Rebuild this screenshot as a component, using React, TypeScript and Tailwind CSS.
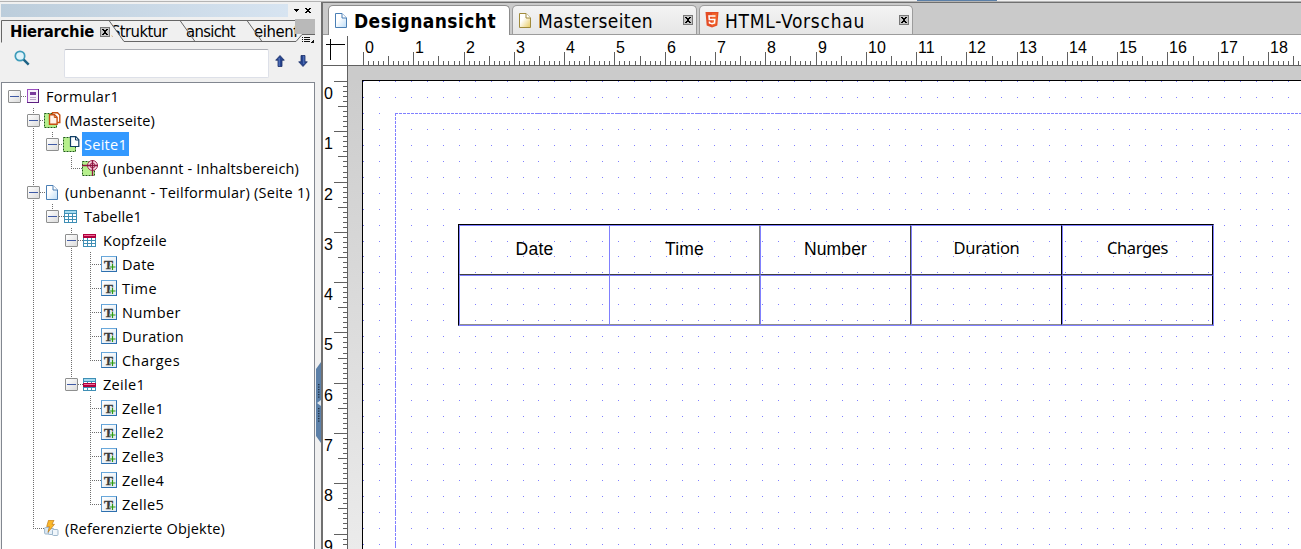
import { useLayoutEffect, useRef, type ReactNode } from "react";

/** Single-line label whose tracking is adjusted so that it fills `w` pixels. */
function Fit({ w, children, className = "" }: { w: number; children: string; className?: string }) {
  const ref = useRef<HTMLSpanElement>(null);
  useLayoutEffect(() => {
    const el = ref.current;
    if (!el) return;
    el.style.letterSpacing = "0px";
    const natural = el.getBoundingClientRect().width;
    el.style.letterSpacing = `${(w - natural) / children.length}px`;
  }, [w, children]);
  return (
    <span ref={ref} className={`inline-block whitespace-pre ${className}`}>
      {children}
    </span>
  );
}

const tabFont = "font-['DejaVu_Sans_Condensed','DejaVu_Sans',sans-serif]";

/* ---------- tree icons ---------- */

function FormIcon() {
  return (
    <svg width="12" height="14" viewBox="0 0 12 14" shapeRendering="crispEdges">
      <rect x=".5" y=".5" width="11" height="13" fill="#f7f0fa" stroke="#9b4fc0" />
      <rect x="11" y="0" width="1" height="14" fill="#5c1f80" />
      <rect x="0" y="13" width="12" height="1" fill="#5c1f80" />
      <rect x="3" y="3" width="6" height="3" fill="#7a3a9c" />
      <path d="M3 8h6v1h-6zM3 10h6v1h-6z" fill="#b9a3c6" />
    </svg>
  );
}

function MasterIcon() {
  return (
    <svg width="17" height="16" viewBox="0 0 17 16">
      <rect x=".5" y="1.5" width="12" height="14" fill="#b6f08c" stroke="#1d5c14" strokeDasharray="2 1" />
      <path d="M8.500 .7h5l2.300 2.300v7.500h-7.300z" fill="#fff" stroke="#c65012" strokeWidth="1.400" />
      <path d="M5.500 2.700h5l2.600 2.600v7h-7.600z" fill="#fff3ea" stroke="#c65012" strokeWidth="1.400" />
      <path d="M10.300 2.700v2.800h2.800" fill="none" stroke="#c65012" />
    </svg>
  );
}

function PageIcon() {
  return (
    <svg width="17" height="17" viewBox="0 0 17 17">
      <rect x=".5" y="1.500" width="12" height="14" fill="#b6f08c" stroke="#1d5c14" strokeDasharray="2 1" />
      <path d="M7.500 .7h5.300l3 3v6.800h-8.300z" fill="#fff" stroke="#123f66" strokeWidth="1.200" />
      <path d="M12.500 .7v3.300h3.300" fill="none" stroke="#123f66" />
    </svg>
  );
}

function AreaIcon() {
  return (
    <svg width="17" height="17" viewBox="0 0 17 17">
      <rect x=".5" y="1.500" width="12" height="14" fill="#b6f08c" stroke="#1d5c14" strokeDasharray="2 1" />
      <circle cx="10.500" cy="5.500" r="5" fill="#f8d8e4" stroke="#a52a55" />
      <circle cx="10.500" cy="5.500" r="2.500" fill="none" stroke="#a52a55" />
      <path d="M0 5.500h16M10.500 0v16" stroke="#8c1540" strokeWidth="1.300" />
    </svg>
  );
}

function SheetIcon({ tone }: { tone: "blue" | "gold" }) {
  const stroke = tone === "blue" ? "#4a7fb5" : "#a08a3c";
  const end = tone === "blue" ? "#bcdcf6" : "#e8c95c";
  return (
    <svg width="12" height="15" viewBox="0 0 12 15">
      <defs>
        <linearGradient id={`sheet-${tone}`} x1="0" y1="0" x2="1" y2="1">
          <stop offset=".35" stopColor="#fff" />
          <stop offset="1" stopColor={end} />
        </linearGradient>
      </defs>
      <path d="M.5 .5h6.500l4.500 4.500v9.500h-11z" fill={`url(#sheet-${tone})`} stroke={stroke} />
      <path d="M7 .5v4.500h4.500" fill="#fff" stroke={stroke} />
    </svg>
  );
}

function TableIcon({ row }: { row?: "head" | "body" }) {
  return (
    <svg width="13" height="13" viewBox="0 0 13 13" shapeRendering="crispEdges">
      <rect width="13" height="13" fill="#3f8fb5" />
      <rect x="1" y="1" width="11" height="2" fill="#a5dbf0" />
      {[1, 5, 9].map((x) => (
        <g key={x} fill="#fff">
          <rect x={x} y="4" width="3" height="2" />
          <rect x={x} y="7" width="3" height="2" />
          <rect x={x} y="10" width="3" height="2" />
        </g>
      ))}
      {row === "head" && (
        <>
          <rect width="13" height="4" fill="#b0003c" />
          <rect x="1" y="1" width="11" height="1" fill="#ee6a98" />
        </>
      )}
      {row === "body" && (
        <>
          <rect y="5" width="13" height="4" fill="#b0003c" />
          <rect x="1" y="6" width="11" height="1" fill="#ee6a98" />
        </>
      )}
    </svg>
  );
}

function TextIcon() {
  return (
    <span className="flex size-4 border border-[#2d6fae] border-t-[#6aa9dc] border-l-[#5b9bd0] bg-linear-to-br from-white to-[#dfe8f0]">
      <svg width="14" height="14" viewBox="0 0 14 14">
        <text x="2" y="11.500" fontSize="13.500" fontWeight="bold" fill="#3c3c3c" stroke="#3c3c3c" strokeWidth=".4" fontFamily="Liberation Serif, serif">T</text>
        <path d="M10.500 7v6M7.500 10h6" stroke="#e8eef3" strokeWidth="2.600" />
        <path d="M10.500 7v6M7.500 10h6" stroke="#2c9a10" strokeWidth="1.200" />
      </svg>
    </span>
  );
}

function RefIcon() {
  return (
    <svg width="15" height="16" viewBox="0 0 15 16">
      <rect x=".6" y="7.500" width="5.500" height="6.500" rx="1" fill="#dbe8f3" stroke="#9db7cc" />
      <rect x="4.500" y="8.500" width="5.500" height="6" rx="1" fill="#e5eff8" stroke="#9db7cc" />
      <rect x="8.500" y="9.500" width="5.500" height="6" rx="1" fill="#f0f6fb" stroke="#9db7cc" />
      <path d="M4.500 .3h5.500l-2 4h2.500l-6.500 8 1.500-5.800h-2.800z" fill="#fbb829" stroke="#c07a18" strokeWidth=".7" />
    </svg>
  );
}

/* ---------- tree ---------- */

type Node = { label: string; w: number; pad: string; icon: ReactNode; box: string; toggle?: boolean; gap: string; on?: boolean };

const cell = (label: string, w: number): Node => ({
  label, w, pad: "pl-[99px]", icon: <TextIcon />, box: "w-4", gap: "ml-[5px]",
});

const nodes: Node[] = [
  { label: "Formular1", w: 73, pad: "pl-[6px]", toggle: true, icon: <FormIcon />, box: "ml-[6px] w-3", gap: "ml-[7px]" },
  { label: "(Masterseite)", w: 90, pad: "pl-[25px]", toggle: true, icon: <MasterIcon />, box: "ml-1 w-[17px]", gap: "ml-1" },
  { label: "Seite1", w: 43, pad: "pl-[44px]", toggle: true, icon: <PageIcon />, box: "ml-1 w-[17px]", gap: "ml-[2px]", on: true },
  { label: "(unbenannt - Inhaltsbereich)", w: 196, pad: "pl-[80px]", icon: <AreaIcon />, box: "w-[17px]", gap: "ml-1" },
  { label: "(unbenannt - Teilformular) (Seite 1)", w: 245, pad: "pl-[25px]", toggle: true, icon: <SheetIcon tone="blue" />, box: "ml-[6px] w-3", gap: "ml-[7px]" },
  { label: "Tabelle1", w: 58, pad: "pl-[44px]", toggle: true, icon: <TableIcon />, box: "ml-[5px] w-[13px]", gap: "ml-[7px]" },
  { label: "Kopfzeile", w: 64, pad: "pl-[63px]", toggle: true, icon: <TableIcon row="head" />, box: "ml-[5px] w-[13px]", gap: "ml-[7px]" },
  cell("Date", 33),
  cell("Time", 35),
  cell("Number", 59),
  cell("Duration", 62),
  cell("Charges", 58),
  { label: "Zeile1", w: 42, pad: "pl-[63px]", toggle: true, icon: <TableIcon row="body" />, box: "ml-[5px] w-[13px]", gap: "ml-[7px]" },
  cell("Zelle1", 42),
  cell("Zelle2", 42),
  cell("Zelle3", 42),
  cell("Zelle4", 42),
  cell("Zelle5", 42),
  { label: "(Referenzierte Objekte)", w: 160, pad: "pl-[42px]", icon: <RefIcon />, box: "w-[15px]", gap: "ml-[6px]" },
];

function Connectors() {
  const rows = [
    [19, 25, 0], [38, 42, 1], [57, 61, 2], [69, 80, 3], [38, 44, 4], [57, 62, 5], [76, 81, 6],
    [88, 99, 7], [88, 99, 8], [88, 99, 9], [88, 99, 10], [88, 99, 11], [76, 81, 12],
    [88, 99, 13], [88, 99, 14], [88, 99, 15], [88, 99, 16], [88, 99, 17], [31, 42, 18],
  ];
  const cols = [[31, 25, 445], [50, 49, 61], [69, 73, 85], [50, 121, 133], [69, 145, 301], [88, 169, 277], [88, 313, 421]];
  return (
    <svg className="absolute left-0 top-0" width="312" height="466" shapeRendering="crispEdges">
      <g stroke="#6e6e6e" strokeDasharray="1 1">
        {rows.map(([a, b, k]) => <path key={k} d={`M${a} ${13.5 + 24 * k}H${b}`} />)}
        {cols.map(([x, a, b], i) => <path key={i} d={`M${x + 0.5} ${a}V${b}`} />)}
      </g>
    </svg>
  );
}

function Tree() {
  return (
    <div className="relative ml-px flex w-[314px] flex-1 flex-col overflow-hidden border border-b-0 border-[#828790] bg-white pt-px">
      <Connectors />
      {nodes.map((n) => (
        <div key={n.label} className={`relative flex h-6 shrink-0 items-center ${n.pad}`}>
          {n.toggle && (
            <span className="flex size-[13px] shrink-0 items-center justify-center rounded-[1px] border border-[#8e8f8f] bg-linear-to-br from-white to-[#dcdcdc]">
              <span className="h-px w-[9px] bg-[#3f5aa5]" />
            </span>
          )}
          <span className={`flex shrink-0 ${n.box}`}>{n.icon}</span>
          <span
            className={`flex h-6 items-center pt-px font-['Open_Sans',sans-serif] text-[14.5px] leading-[23px] ${n.gap} ${
              n.on ? "w-[47px] bg-[#3399ff] pl-[2px] text-white" : "text-black"
            }`}
          >
            <Fit w={n.w}>{n.label}</Fit>
          </span>
        </div>
      ))}
    </div>
  );
}

/* ---------- left panel ---------- */

function CloseBox() {
  return (
    <svg width="10" height="10" viewBox="0 0 10 10" shapeRendering="crispEdges">
      <rect x=".5" y=".5" width="9" height="9" fill="#c4c4c4" stroke="#777" />
      <path d="M2 2h2v1h2v-1h2v1h-1v1h-1v2h1v1h1v1h-2v-1h-2v1h-2v-1h1v-1h1v-2h-1v-1h-1z" fill="#000" />
    </svg>
  );
}

function PanelTabs() {
  return (
    <div className={`relative ml-px flex h-[25px] w-[314px] pt-px text-[16.5px] leading-6 ${tabFont}`}>
      <svg className="absolute left-0 top-0" width="314" height="25">
        <g fill="none" stroke="#666">
          <path d="M.5 23.500V1.500H294" />
          <path d="M123 22.500H295l6-7h13" />
        </g>
      </svg>
      <div className="flex w-[110px] shrink-0 items-center pl-[9px]">
        <Fit w={84} className="font-bold">Hierarchie</Fit>
        <span className="ml-[6px]"><CloseBox /></span>
      </div>
      <div className="flex w-[71px] shrink-0"><Fit w={56}>Struktur</Fit></div>
      <div className="flex w-[67px] shrink-0 pl-[4px]"><Fit w={49}>ansicht</Fit></div>
      <div className="flex w-[46px] shrink-0 pl-[5px]"><Fit w={44}>eihenf</Fit></div>
      <svg className="absolute left-0 top-0" width="314" height="25">
        <rect x="294" y="0" width="20" height="15" fill="#b9b9b9" />
        <path d="M109 2v12l6 8h7z" fill="#f0f0f0" />
        <g fill="none" stroke="#666">
          <path d="M108 1.500L123 22.500M179 1.500L194 22.500M246 1.500L261 22.500" />
        </g>
        <g fill="#111" shapeRendering="crispEdges">
          <path d="M301 18h1v1h-1zM303 18h6v1h-6zM301 20h1v1h-1zM303 20h6v1h-6zM301 22h1v1h-1zM303 22h6v1h-6z" />
          <path d="M313 20v4h-4z" />
        </g>
      </svg>
    </div>
  );
}

function Arrow({ down = false }: { down?: boolean }) {
  return (
    <svg width="10" height="12" viewBox="0 0 10 12" className={down ? "rotate-180" : ""}>
      <path d="M5 .5L9.300 5.200H7v6.300H3V5.200H.7z" fill="#27458f" stroke="#1a2f68" strokeWidth=".8" />
      <path d="M4.200 3v8" stroke="#5b7cc4" />
    </svg>
  );
}

function Sidebar() {
  return (
    <div className="flex w-[316px] shrink-0 flex-col bg-[#f0f0f0]">
      <div className="flex h-[16px] items-start pl-px pt-[2px]">
        <div className="h-[13px] w-[287px] bg-linear-to-r from-[#bccddb] to-[#d7e4f1]" />
        <svg width="26" height="13" viewBox="0 0 26 13" shapeRendering="crispEdges">
          <path d="M6 5h5v1h-1v1h-1v1h-1v-1h-1v-1h-1z" />
          <path d="M17 4h2v1h2v-1h2v1h-1v1h-1v1h1v1h1v1h-2v-1h-2v1h-2v-1h1v-1h1v-1h-1v-1h-1z" />
        </svg>
      </div>
      <div className="h-px" />
      <PanelTabs />
      <div className="flex h-[38px] items-start pl-[14px]">
        <svg width="16" height="16" viewBox="0 0 16 16" className="mt-[6px]">
          <circle cx="6" cy="6" r="4.700" fill="#dff3fa" stroke="#3d9cba" strokeWidth="1.700" />
          <path d="M9.700 9.700l5 5" stroke="#1d6285" strokeWidth="2.500" />
        </svg>
        <div className="ml-[34px] mt-[5px] h-[29px] w-[205px] rounded-[2px] border border-[#dde0e8] border-t-[#abadb3] bg-white" />
        <span className="ml-[6px] mt-[11px]"><Arrow /></span>
        <span className="ml-[13px] mt-[11px]"><Arrow down /></span>
      </div>
      <Tree />
    </div>
  );
}

function Splitter() {
  return (
    <div className="flex w-[5px] shrink-0 flex-col bg-[#f0f0f0] pt-[360px]">
      <svg width="5" height="81" viewBox="0 0 5 81">
        <path d="M5 0L0 7v67l5 7z" fill="#5c80a8" />
        <path d="M5 38v6l-4-3z" fill="#dfe7ef" />
        <g fill="#1f3348">
          {Array.from({ length: 12 }, (_, i) => (
            <rect key={i} x="2" y={(i < 6 ? 22 : 34) + i * 2.5 - (i < 6 ? 0 : 3)} width="1.500" height="1.200" />
          ))}
        </g>
      </svg>
    </div>
  );
}

/* ---------- document area ---------- */

function DocTabs() {
  const idle = "flex h-[29px] items-center rounded-t-[5px] border border-b-0 border-[#9c9c9c] bg-linear-to-b from-[#f4f4f4] to-[#e6e6e6]";
  return (
    <div className={`flex h-[32px] shrink-0 bg-[#cacaca] text-[19px] leading-7 ${tabFont}`}>
      <div className="w-[5px] border-b border-[#9c9c9c]" />
      <div className="mt-[2px] flex h-[30px] w-[182px] items-center rounded-t-[5px] border border-b-0 border-[#8c8c8c] bg-white pl-[6px]">
        <SheetIcon tone="blue" />
        <span className="ml-[7px]"><Fit w={142} className="font-bold">Designansicht</Fit></span>
      </div>
      <div className="flex flex-1 border-b border-[#9c9c9c] pt-[2px] pl-[2px]">
        <div className={`${idle} w-[185px] pl-[6px]`}>
          <SheetIcon tone="gold" />
          <span className="ml-[7px] pt-px"><Fit w={115}>Masterseiten</Fit></span>
          <span className="ml-[30px] mb-px"><CloseBox /></span>
        </div>
        <div className={`${idle} ml-[2px] w-[214px] pl-[5px]`}>
          <svg width="14" height="16" viewBox="0 0 14 16">
            <path d="M.5 0h13l-1.200 13.500L7 15.500l-5.300-2z" fill="#e44d26" />
            <path d="M7 1.200h5.200l-1 11.400L7 14.200z" fill="#f16529" />
            <path d="M10.500 4H4l.3 3.500h5.500l-.3 3.400L7 11.700l-2.500-.8-.1-1.400" fill="none" stroke="#fff" strokeWidth="1.500" />
          </svg>
          <span className="ml-[6px] pt-px"><Fit w={140}>HTML-Vorschau</Fit></span>
          <span className="ml-[34px] mb-px"><CloseBox /></span>
        </div>
      </div>
    </div>
  );
}

const STEP = 50.28;
const tickLength = (i: number) => (i % 10 === 0 ? 13 : i % 5 === 0 ? 9 : 4);

function HorizontalRuler() {
  return (
    <svg className="block shrink-0" width="953" height="31" shapeRendering="crispEdges">
      <rect width="953" height="31" fill="#fff" />
      <rect y="30" width="953" height="1" fill="#606060" />
      <path
        stroke="#606060"
        d={Array.from({ length: 187 }, (_, i) => `M${Math.round(15 + (i * STEP) / 10) + 0.5} 31v-${tickLength(i) + 1}`).join("")}
      />
      <g fontFamily="Liberation Sans, Arial, sans-serif" fontSize="16" fill="#000">
        {Array.from({ length: 19 }, (_, n) => (
          <text key={n} x={Math.round(15 + n * STEP) + 2} y="18">{n}</text>
        ))}
      </g>
    </svg>
  );
}

function VerticalRuler() {
  return (
    <svg className="block shrink-0" width="25" height="483">
      <rect width="25" height="483" fill="#fff" />
      <rect x="24" width="1" height="483" fill="#606060" />
      <path
        shapeRendering="crispEdges"
        stroke="#606060"
        d={Array.from({ length: 94 }, (_, i) => `M24 ${Math.round(15 + (i * STEP) / 10) + 0.5}h-${tickLength(i)}`).join("")}
      />
      <g fontFamily="Liberation Sans, Arial, sans-serif" fontSize="16" fill="#000">
        {Array.from({ length: 10 }, (_, n) => (
          <text key={n} x="1" y={Math.round(15 + n * STEP) + 18}>{n}</text>
        ))}
      </g>
    </svg>
  );
}

function GridDots() {
  const d: string[] = [];
  for (let r = 0; r < 30; r++) {
    for (let c = 0; c < 60; c++) {
      d.push(`M${Math.round(c * 15.95)} ${Math.round(r * 15.95)}h1v1h-1z`);
    }
  }
  return (
    <svg className="absolute left-0 top-0" width="938" height="468" shapeRendering="crispEdges">
      <path d={d.join("")} fill="#8080ff" />
      <path d="M32 32.500H938M32.500 32V468" fill="none" stroke="#8080ff" strokeDasharray="3 1" />
    </svg>
  );
}

const arial = "pt-px font-[family-name:'Liberation_Sans',Arial,sans-serif] text-[17.5px]";
const humanist = "pb-px font-[family-name:'Noto_Sans',sans-serif] text-[16.5px]";

const columns = [
  { label: "Date", w: 38, edge: "border-r-0", font: arial },
  { label: "Time", w: 39, edge: "border-r-[#808080]", font: arial },
  { label: "Number", w: 63, edge: "border-r-[#404040]", font: arial },
  { label: "Duration", w: 66, edge: "border-r-black", font: humanist },
  { label: "Charges", w: 61, edge: "border-r-black", font: humanist },
];

function FormTable() {
  return (
    <div className="absolute left-[95px] top-[143px] w-[756px] border border-t-black border-l-black border-r-[#8080ff] border-b-[#8080ff]">
      <div className="grid grid-cols-[150px_151px_151px_151px_151px]">
        {columns.map((c) => (
          <div key={c.label} className={`flex h-[50px] items-center justify-center border border-t-[#8080ff] border-l-[#8080ff] border-b-[#404040] leading-none text-black ${c.edge} ${c.font}`}>
            <Fit w={c.w} className="-translate-y-px">{c.label}</Fit>
          </div>
        ))}
        {columns.map((c) => (
          <div key={c.label} className={`h-[50px] border border-t-[#8080ff] border-l-[#8080ff] border-b-[#8c8c8c] ${c.edge}`} />
        ))}
      </div>
    </div>
  );
}

function Workspace() {
  return (
    <div className="flex min-w-0 flex-1 flex-col">
      <DocTabs />
      <div className="flex h-[31px] shrink-0">
        <svg className="block shrink-0" width="25" height="31" shapeRendering="crispEdges">
          <rect width="25" height="31" fill="#fff" />
          <path d="M3 9.500h19M7.500 4v21" stroke="#000" />
          <path d="M0 30.500h25M24.500 1v30" stroke="#606060" />
        </svg>
        <HorizontalRuler />
      </div>
      <div className="flex min-h-0 flex-1">
        <VerticalRuler />
        <div className="min-w-0 flex-1 bg-linear-to-b from-[#cbcbcb] to-[#ebebeb] pl-[14px]">
          <div className="-ml-[14px] h-[14px] bg-[#cbcbcb]" />
          <div className="h-[469px] border-t border-l border-black bg-white">
            <div className="relative h-[468px] overflow-hidden">
              <GridDots />
              <FormTable />
            </div>
          </div>
        </div>
      </div>
    </div>
  );
}

export default function App() {
  return (
    <div className="flex h-[549px] w-[1301px] flex-col overflow-hidden bg-[#f0f0f0]">
      <div className="flex h-[2px] shrink-0 flex-col">
        <div className="h-px pl-[917px]"><div className="h-px w-[80px] bg-[#5c80a8]" /></div>
        <div className="h-px bg-[#b4b4b4]" />
      </div>
      <div className="flex min-h-0 flex-1">
        <Sidebar />
        <Splitter />
        <div className="flex min-w-0 flex-1 flex-col border-t border-l-2 border-[#707070]">
          <Workspace />
        </div>
      </div>
    </div>
  );
}
